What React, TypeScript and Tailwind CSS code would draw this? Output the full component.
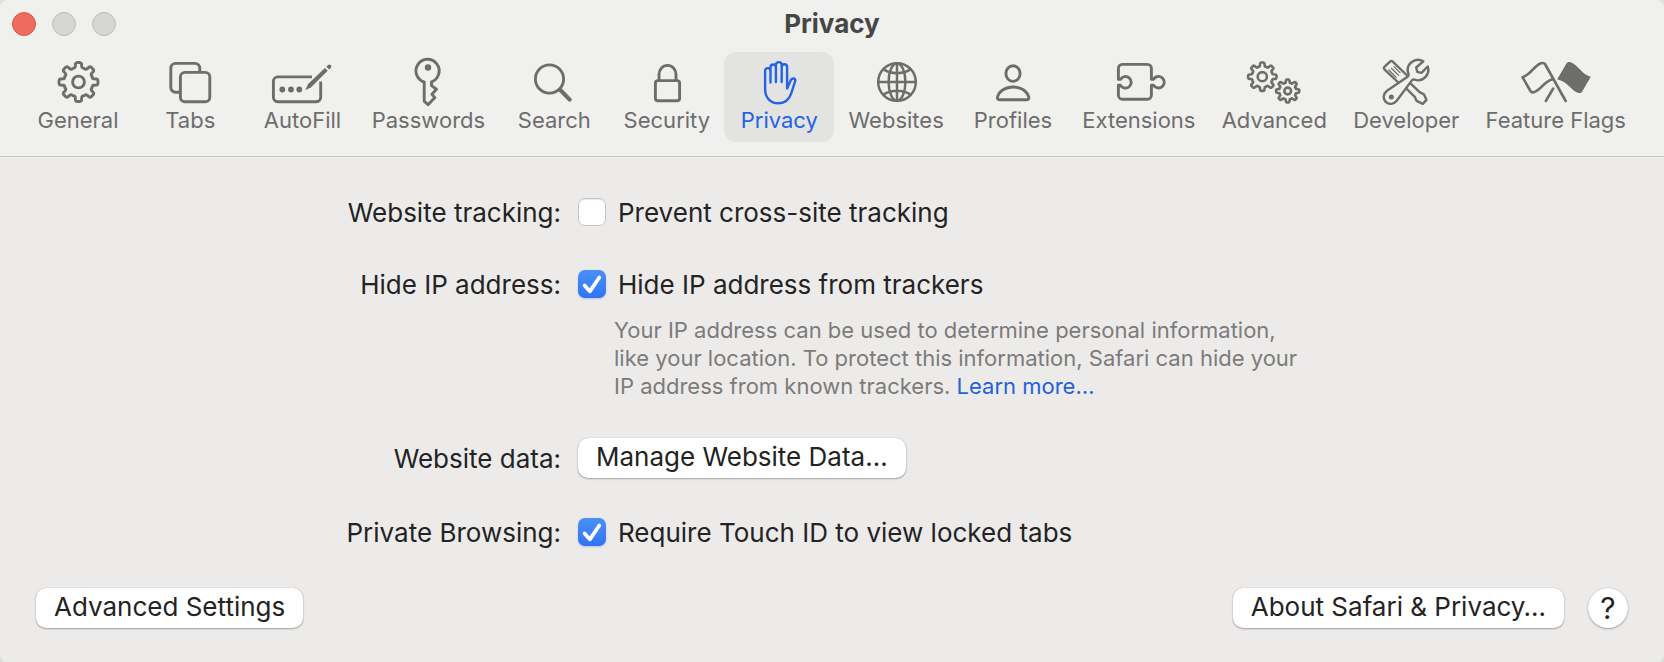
import { useState, type ReactNode } from 'react';
import clsx from 'clsx';

// closed outline of a cog, eight teeth unless told otherwise
function gearPath(cx: number, cy: number, outer: number, inner: number, teeth = 8) {
  const step = (Math.PI * 2) / teeth;
  const point = (r: number, a: number) =>
    (cx + r * Math.sin(a)).toFixed(2) + ' ' + (cy - r * Math.cos(a)).toFixed(2);
  let d = '';
  for (let i = 0; i < teeth; i++) {
    const a = i * step;
    d += (i === 0 ? 'M' : 'L') + point(inner + 0.6, a - step * 0.27);
    d += 'L' + point(outer - 1, a - step * 0.21);
    d += 'Q' + point(outer, a - step * 0.18) + ' ' + point(outer, a - step * 0.11);
    d += 'L' + point(outer, a + step * 0.11);
    d += 'Q' + point(outer, a + step * 0.18) + ' ' + point(outer - 1, a + step * 0.21);
    d += 'L' + point(inner + 0.6, a + step * 0.27);
    d += 'Q' + point(inner - 0.8, a + step * 0.34) + ' ' + point(inner, a + step * 0.5);
    d += 'Q' + point(inner - 0.8, a + step * 0.66) + ' ' + point(inner + 0.6, a + step * 0.73);
  }
  return d + 'Z';
}

function Icon({ children }: { children: ReactNode }) {
  return (
    <svg
      width="80"
      height="50"
      viewBox="0 0 80 50"
      fill="none"
      stroke="currentColor"
      strokeWidth="2.9"
      strokeLinecap="round"
      strokeLinejoin="round"
      aria-hidden="true"
      className="shrink-0"
    >
      {children}
    </svg>
  );
}

const tabs = [
  {
    name: 'General',
    icon: (
      <Icon>
        <path d={gearPath(40.5, 25, 19.5, 14.8)} />
        <circle cx="40.5" cy="25" r="5.9" />
      </Icon>
    ),
  },
  {
    name: 'Tabs',
    icon: (
      <Icon>
        <path d="M29 35.3h-3.4a4.8 4.8 0 0 1-4.8-4.8V11.2a4.8 4.8 0 0 1 4.8-4.8H45a4.8 4.8 0 0 1 4.8 4.8V14" />
        <rect x="30.4" y="15.4" width="29.4" height="29.4" rx="4.6" />
      </Icon>
    ),
  },
  {
    name: 'AutoFill',
    icon: (
      <Icon>
        <path
          strokeLinecap="butt"
          d="M50 19.9H15.8a4.4 4.4 0 0 0-4.4 4.4v16a4.4 4.4 0 0 0 4.4 4.4h38.5a4.4 4.4 0 0 0 4.4-4.4V24.5"
        />
        <g fill="currentColor" stroke="none">
          <circle cx="20.3" cy="32.5" r="2.9" />
          <circle cx="29" cy="32.5" r="2.9" />
          <circle cx="37.3" cy="32.5" r="2.9" />
          <path d="M43.3 33.3l2.8-6.2 16.8-16.2 2.8 2.8-16.6 16.5z" />
          <path d="M64.3 9.7l1.8-1.7a2 2 0 0 1 2.8 2.8l-1.8 1.8z" />
        </g>
      </Icon>
    ),
  },
  {
    name: 'Passwords',
    icon: (
      <Icon>
        <path d="M36.2 25a11.6 11.6 0 1 1 7.3-.2v3.8l5 3.6-4.6 5 3 3.4-6.8 7.2-3.9-3.7z" />
        <circle cx="40" cy="10.5" r="3.2" fill="currentColor" stroke="none" />
      </Icon>
    ),
  },
  {
    name: 'Search',
    icon: (
      <Icon>
        <circle cx="35.5" cy="22" r="14.1" />
        <path strokeWidth="4.2" d="M46.3 33l9.4 9.6" />
      </Icon>
    ),
  },
  {
    name: 'Security',
    icon: (
      <Icon>
        <path d="M32 23.6v-6a8.5 9.2 0 0 1 17 0v6" />
        <rect x="28.4" y="23.6" width="24.2" height="20.2" rx="2.6" />
      </Icon>
    ),
  },
  {
    name: 'Privacy',
    icon: (
      <Icon>
        <path
          strokeWidth="2.4"
          d="M31.5 25.5V13.8a2.7 2.7 0 0 0-5.4 0V32c0 9.2 5.8 14.3 13 14.3 6.6 0 11-3.4 13.2-10.2l3.8-11.6c.5-1.6-.1-2.6-1.2-3-1.2-.3-2.2.2-3 1.6l-3.8 8.3V10a2.7 2.7 0 0 0-5.4 0M31.5 14v-3.8a2.7 2.7 0 0 1 5.4 0v14.9M36.9 11V8a2.9 2.9 0 0 1 5.8 0v17.1"
        />
      </Icon>
    ),
  },
  {
    name: 'Websites',
    icon: (
      <Icon>
        <g strokeWidth="2.5">
          <circle cx="41" cy="25" r="18.8" />
          <ellipse cx="41" cy="25" rx="8.4" ry="18.8" />
          <path d="M41 6.2v37.6M22.2 25h37.6M27.4 12.4c8 5 19.2 5 27.2 0M27.4 37.6c8-5 19.2-5 27.2 0" />
        </g>
      </Icon>
    ),
  },
  {
    name: 'Profiles',
    icon: (
      <Icon>
        <ellipse cx="40" cy="16.6" rx="7.1" ry="7.8" />
        <path d="M27 42.8h26.5c1.8 0 2.6-1 2.2-2.8C54.2 34 48 30 40.2 30S26 34 24.5 40c-.4 1.8.6 2.8 2.5 2.8z" />
      </Icon>
    ),
  },
  {
    name: 'Extensions',
    icon: (
      <Icon>
        <path d="M19.4 22.4V11.4a4 4 0 0 1 4-4h25a4 4 0 0 1 4 4v10.8h2.1a5.8 5.8 0 1 1 0 6h-2.1v10a4 4 0 0 1-4 4h-25a4 4 0 0 1-4-4V28.2h2a5.8 5.8 0 1 0 0-5.8z" />
      </Icon>
    ),
  },
  {
    name: 'Advanced',
    icon: (
      <Icon>
        <g strokeWidth="2.6">
          <path d={gearPath(28.3, 19.7, 14.2, 10.7)} />
          <circle cx="28.3" cy="19.7" r="4.6" />
          <path d={gearPath(53.7, 34, 11.6, 8.7)} />
          <circle cx="53.7" cy="34" r="3.4" />
        </g>
      </Icon>
    ),
  },
  {
    name: 'Developer',
    icon: (
      <Icon>
        <g strokeWidth="2.4">
          <path d="M32.3 25.5L18.7 12.6c-1-1-1-2 0-3l5-4.7c1-1 2.3-1 3.3 0L40.6 18" />
          <path strokeWidth="1.3" d="M22.8 13l7.4 7.4M25.4 11.2l7.2 7.2M28 9.6l6 6" />
          <path d="M40.3 31.5l8.7 8.7 1.6 3.7 6.2 3 3.7-4-2.6-5.6-4.3-2.1-8.3-8" />
          <path d="M57.3 4.3a10.3 10.3 0 0 0-14.9 12.4c.4 1.3.2 2.2-.8 3L21 33.8c-4 3.3-4.2 8-1.3 11 3.2 3.2 8.2 2.7 11.2-1.2l14.8-20c.8-1 1.6-1.3 3-.9A10.3 10.3 0 0 0 61.7 9.5l-6.2 6.3-4.3-1-1-4.3z" />
        </g>
        <circle cx="25.3" cy="40" r="2.5" fill="currentColor" stroke="none" />
      </Icon>
    ),
  },
  {
    name: 'Feature Flags',
    icon: (
      <Icon>
        <g strokeWidth="2.6">
          <path d="M49.7 44L29 7c-1-1.3-2.2-1.3-4-.7C18 8.5 15.5 17.5 6.5 20.2l8 13.8c1 1.5 2.3 1.7 4 1 7-2.5 9.5-10.5 18-12.7" />
          <path d="M29.8 44l7.4-12.5" />
        </g>
        <path
          stroke="none"
          fill="currentColor"
          d="M41.5 21.7l8.8-15c1-1.7 2.6-2.2 4.8-1.3C62.5 8.2 65 16.7 74.8 19.7l-8.6 14.8c-1 1.7-2.4 2-4.5 1.2C54.5 33 51.5 24.5 41.5 22.5z"
        />
      </Icon>
    ),
  },
];

function Checkbox({ label, defaultChecked }: { label: string; defaultChecked?: boolean }) {
  const [checked, setChecked] = useState(!!defaultChecked);

  return (
    <label className="flex h-7 items-center gap-3">
      <span className="grid shrink-0">
        <input
          type="checkbox"
          checked={checked}
          onChange={(e) => setChecked(e.target.checked)}
          className="col-start-1 row-start-1 size-7 appearance-none rounded-[7px] border border-[#c6c5c4] bg-white shadow-[inset_0_1px_1px_rgba(0,0,0,0.08)] checked:border-0 checked:bg-linear-to-b checked:from-[#4a90f8] checked:to-[#3173f6] checked:shadow-[0_1px_2px_rgba(49,115,246,0.3)]"
        />
        {checked && (
          <svg
            viewBox="0 0 28 28"
            fill="none"
            stroke="white"
            strokeWidth="3.8"
            strokeLinecap="round"
            strokeLinejoin="round"
            aria-hidden="true"
            className="pointer-events-none col-start-1 row-start-1 size-7"
          >
            <path d="M6.6 15.5l5.2 5.8L21.3 7.5" />
          </svg>
        )}
      </span>
      <span className="pt-[2px]">{label}</span>
    </label>
  );
}

function PushButton({ children }: { children: ReactNode }) {
  return (
    <button
      type="button"
      className="h-10 rounded-[10px] bg-white px-[18px] pb-[2px] shadow-[0_0_1px_rgba(0,0,0,0.3),0_1px_2px_rgba(0,0,0,0.3)]"
    >
      {children}
    </button>
  );
}

export default function App() {
  const [active, setActive] = useState('Privacy');

  return (
    <div className="bg-[#dededc]">
      <div className="flex min-h-screen flex-col overflow-hidden rounded-lg bg-[#ecebea] font-['Inter',sans-serif] text-[26px] leading-7 text-[#232323]">
        <header className="border-b border-[#c9c8c7] bg-[#f0f0ee] pb-[14px]">
          <div className="grid h-[52px] grid-cols-3 items-center px-3 pb-1">
            <div className="flex gap-4">
              <button
                type="button"
                aria-label="Close"
                className="size-6 rounded-full border border-[#d9564b] bg-[#ed6b60]"
              />
              <button
                type="button"
                aria-label="Minimize"
                className="size-6 rounded-full border border-[#bdbcbb] bg-[#d6d6d4]"
              />
              <button
                type="button"
                aria-label="Zoom"
                className="size-6 rounded-full border border-[#bdbcbb] bg-[#d6d6d4]"
              />
            </div>
            <h1 className="text-center font-bold text-[#464645]">{active}</h1>
          </div>
          <nav className="flex justify-between pr-[26px] pl-[23px]">
            {tabs.map((tab) => (
              <button
                key={tab.name}
                type="button"
                onClick={() => setActive(tab.name)}
                className={clsx(
                  'flex min-w-[110px] flex-col items-center rounded-xl px-3 pt-[5px] pb-[9px] text-[22px] leading-[26px] whitespace-nowrap',
                  active === tab.name ? 'bg-[#e3e3e1] text-[#2462e6]' : 'text-[#6d6d6b]'
                )}
              >
                {tab.icon}
                {tab.name}
              </button>
            ))}
          </nav>
        </header>

        <main className="flex grow flex-col px-9 pt-[41px] pb-[34px]">
          <div className="grid grid-cols-[1fr_2fr] gap-x-[17px]">
            <span className="h-7 pt-px text-right">Website tracking:</span>
            <Checkbox label="Prevent cross-site tracking" />

            <span className="mt-11 h-7 pt-px text-right">Hide IP address:</span>
            <div className="mt-11">
              <Checkbox label="Hide IP address from trackers" defaultChecked />
              <p className="mt-[18px] max-w-[740px] pl-9 text-[22px] text-[#7c7b7a]">
                Your IP address can be used to determine personal information,
                <br />
                like your location. To protect this information, Safari can hide your
                <br />
                IP address from known trackers.{' '}
                <a href="#" className="text-[#2462d6]">
                  Learn more…
                </a>
              </p>
            </div>

            <span className="mt-[38px] self-center pt-[2px] text-right">Website data:</span>
            <div className="mt-[38px]">
              <PushButton>Manage Website Data…</PushButton>
            </div>

            <span className="mt-10 h-7 pt-px text-right">Private Browsing:</span>
            <div className="mt-10">
              <Checkbox label="Require Touch ID to view locked tabs" defaultChecked />
            </div>
          </div>

          <footer className="mt-auto flex items-center gap-6">
            <PushButton>Advanced Settings</PushButton>
            <div className="grow" />
            <PushButton>About Safari & Privacy…</PushButton>
            <button
              type="button"
              aria-label="Help"
              className="size-10 rounded-full bg-white text-[30px] shadow-[0_0_1px_rgba(0,0,0,0.3),0_1px_2px_rgba(0,0,0,0.3)]"
            >
              ?
            </button>
          </footer>
        </main>
      </div>
    </div>
  );
}
